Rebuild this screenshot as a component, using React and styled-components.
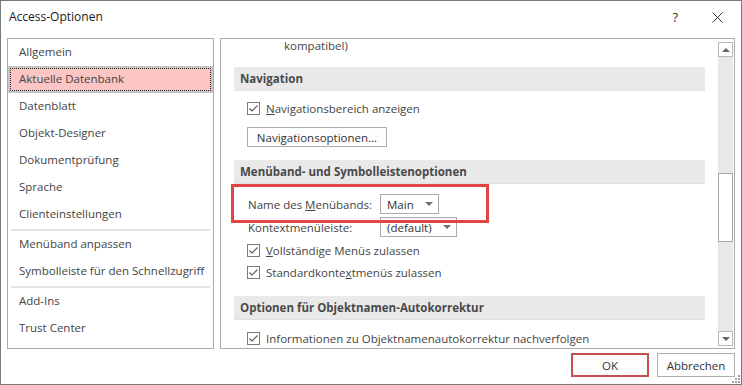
import React from 'react'
import styled, { createGlobalStyle } from 'styled-components';

const GlobalStyle = createGlobalStyle`
html, body {
  margin: 0;
  padding: 0;
  background: #fff;
}
body {
  font-family: "Open Sans", "Noto Sans", sans-serif;
  font-size: 11px;
  color: #444;
}
`;

const categories = [
  { label: 'Allgemein' },
  { label: 'Aktuelle Datenbank', active: true },
  { label: 'Datenblatt' },
  { label: 'Objekt-Designer' },
  { label: 'Dokumentprüfung' },
  { label: 'Sprache' },
  { label: 'Clienteinstellungen' },
  { separator: true },
  { label: 'Menüband anpassen' },
  { label: 'Symbolleiste für den Schnellzugriff' },
  { separator: true },
  { label: 'Add-Ins' },
  { label: 'Trust Center' },
];

const CheckIcon = () => (
  <svg width="13" height="13" viewBox="0 0 13 13">
    <rect x="0.5" y="0.5" width="12" height="12" fill="#fff" stroke="#7a7a7a" />
    <polyline points="2.5,6.5 5,9 10.5,3.5" fill="none" stroke="#555" strokeWidth="1.1" />
  </svg>
);

const Checkbox = ({ children }) => (
  <CheckRow>
    <CheckIcon />
    <span>{children}</span>
  </CheckRow>
);

const Combo = ({ value, width }) => (
  <ComboBox $width={width}>
    <span>{value}</span>
    <Caret />
  </ComboBox>
);

const App = () => {
  return (
    <>
      <GlobalStyle />
      <Window>
        <TitleBar>
          <Title>Access-Optionen</Title>
          <TitleButtons>
            <HelpButton>?</HelpButton>
            <CloseButton>
              <svg width="11" height="11" viewBox="0 0 11 11">
                <path d="M0.5 0.5 L10.5 10.5 M10.5 0.5 L0.5 10.5" stroke="#333" strokeWidth="1" />
              </svg>
            </CloseButton>
          </TitleButtons>
        </TitleBar>

        <Body>
          <CategoryList>
            {categories.map((c, i) =>
              c.separator ? (
                <Separator key={i} />
              ) : (
                <CategoryItem key={i} $active={c.active}>{c.label}</CategoryItem>
              )
            )}
          </CategoryList>

          <SettingsPanel>
            <SettingsContent>
              <CutLine>kompatibel)</CutLine>

              <SectionHeader $top={14}>Navigation</SectionHeader>
              <Indent $top={6}>
                <Checkbox><u>N</u>avigationsbereich anzeigen</Checkbox>
              </Indent>
              <Indent $top={8}>
                <PushButton>Navigationsoptionen...</PushButton>
              </Indent>

              <SectionHeader $top={13}>Menüband- und Symbolleistenoptionen</SectionHeader>
              <FieldRow $top={10}>
                <FieldLabel>Name des <u>M</u>enübands:</FieldLabel>
                <Combo value="Main" width={59} />
                <Highlight />
              </FieldRow>
              <FieldRow $top={3}>
                <FieldLabel>Kontextmenüleiste:</FieldLabel>
                <Combo value="(default)" width={77} />
              </FieldRow>
              <Indent $top={2}>
                <Checkbox><u>V</u>ollständige Menüs zulassen</Checkbox>
                <Checkbox>Standardkonte<u>x</u>tmenüs zulassen</Checkbox>
              </Indent>

              <SectionHeader $top={13}>Optionen für Objektnamen-Autokorrektur</SectionHeader>
              <Indent $top={7}>
                <Checkbox>Informationen zu Objektnamenautokorrektur nachverfolgen</Checkbox>
              </Indent>
            </SettingsContent>

            <ScrollBar>
              <ScrollArrow><ArrowUp /></ScrollArrow>
              <ScrollTrack>
                <ScrollThumb $offset={116} $size={69} />
              </ScrollTrack>
              <ScrollArrow><ArrowDown /></ScrollArrow>
            </ScrollBar>
          </SettingsPanel>
        </Body>

        <Footer>
          <DialogButton $primary>OK</DialogButton>
          <DialogButton>Abbrechen</DialogButton>
          <Grip>
            <svg width="8" height="8" viewBox="0 0 8 8">
              <rect x="6" y="0" width="2" height="2" fill="#a0a0a0" />
              <rect x="3" y="3" width="2" height="2" fill="#a0a0a0" />
              <rect x="6" y="3" width="2" height="2" fill="#a0a0a0" />
              <rect x="0" y="6" width="2" height="2" fill="#a0a0a0" />
              <rect x="3" y="6" width="2" height="2" fill="#a0a0a0" />
              <rect x="6" y="6" width="2" height="2" fill="#a0a0a0" />
            </svg>
          </Grip>
        </Footer>
      </Window>
    </>
  )
}

export default App

const Window = styled.div`
width: 742px;
height: 385px;
box-sizing: border-box;
border: 1px solid #7a7a7a;
background: #fff;
display: flex;
flex-direction: column;
`;

const TitleBar = styled.div`
height: 37px;
box-sizing: border-box;
padding: 7px 0 0 8px;
display: flex;
justify-content: space-between;
align-items: flex-start;
`;

const Title = styled.div`
font-size: 12px;
line-height: 18px;
color: #1a1a1a;
`;

const TitleButtons = styled.div`
display: flex;
align-items: center;
height: 18px;
padding-right: 18px;
gap: 34px;
`;

const HelpButton = styled.span`
font-size: 13px;
color: #333;
line-height: 18px;
`;

const CloseButton = styled.span`
display: flex;
align-items: center;
`;

const Body = styled.div`
display: flex;
gap: 6px;
padding: 0 6px;
height: 311px;
`;

const Panel = styled.div`
box-sizing: border-box;
border: 1px solid #ababab;
height: 311px;
background: #fff;
`;

const CategoryList = styled(Panel)`
width: 207px;
display: flex;
flex-direction: column;
`;

const CategoryItem = styled.div`
height: 27px;
box-sizing: border-box;
line-height: 25px;
padding-left: 11px;
color: #444;
font-size: 11.5px;
white-space: nowrap;
${p => p.$active && `
  background: #fdc4c4;
  border: 2px solid #c6c6c6;
  line-height: 21px;
  outline: 1px dotted #222;
  outline-offset: -3px;
  padding-left: 9px;
`}
`;

const Separator = styled.div`
height: 3px;
display: flex;
align-items: center;
&::after {
  content: '';
  flex: 1;
  height: 2px;
  margin: 0 3px;
  background: #e3e3e3;
}
`;

const SettingsPanel = styled(Panel)`
width: 515px;
display: flex;
`;

const SettingsContent = styled.div`
flex: 1;
overflow: hidden;
padding: 0 13px;
display: flex;
flex-direction: column;
`;

const CutLine = styled.div`
line-height: 14px;
padding-left: 50px;
font-size: 11.5px;
`;

const SectionHeader = styled.div`
margin-top: ${p => p.$top}px;
height: 24px;
box-sizing: border-box;
line-height: 23px;
background: #e9e9e9;
border-bottom: 1px solid #e2e2e2;
padding-left: 6px;
font-weight: bold;
font-size: 11.5px;
color: #4a4a4a;
`;

const Indent = styled.div`
margin-top: ${p => p.$top}px;
padding-left: 13px;
display: flex;
flex-direction: column;
align-items: flex-start;
`;

const CheckRow = styled.label`
display: flex;
align-items: center;
gap: 6px;
height: 22px;
font-size: 11.5px;
color: #444;
white-space: nowrap;
svg { flex: none; }
`;

const PushButton = styled.button`
height: 20px;
width: 140px;
box-sizing: border-box;
border: 1px solid #adadad;
background: #fdfdfd;
font-family: inherit;
font-size: 11.5px;
color: #333;
padding: 0;
`;

const FieldRow = styled.div`
position: relative;
margin-top: ${p => p.$top}px;
padding-left: 14px;
display: flex;
align-items: center;
height: 20px;
`;

const FieldLabel = styled.span`
width: 132px;
font-size: 11.5px;
color: #444;
white-space: nowrap;
`;

const ComboBox = styled.div`
width: ${p => p.$width}px;
height: 20px;
box-sizing: border-box;
border: 1px solid #ababab;
background: #fff;
display: flex;
align-items: center;
justify-content: space-between;
padding: 0 5px 0 6px;
font-size: 11.5px;
color: #333;
`;

const Caret = styled.span`
width: 0;
height: 0;
border-left: 4px solid transparent;
border-right: 4px solid transparent;
border-top: 4px solid #707070;
`;

const Highlight = styled.div`
position: absolute;
left: -3px;
top: -10px;
width: 258px;
height: 39px;
box-sizing: border-box;
border: 3px solid #e24545;
pointer-events: none;
z-index: 2;
`;

const ScrollBar = styled.div`
width: 16px;
box-sizing: border-box;
padding: 3px 1px 2px 0;
display: flex;
flex-direction: column;
`;

const ScrollArrow = styled.div`
height: 15px;
box-sizing: border-box;
border: 1px solid #b8b8b8;
background: #fff;
display: flex;
align-items: center;
justify-content: center;
`;

const ArrowUp = styled.span`
border-left: 4px solid transparent;
border-right: 4px solid transparent;
border-bottom: 4px solid #666;
`;

const ArrowDown = styled.span`
border-left: 4px solid transparent;
border-right: 4px solid transparent;
border-top: 4px solid #666;
`;

const ScrollTrack = styled.div`
flex: 1;
background: #e8e8e8;
display: flex;
flex-direction: column;
`;

const ScrollThumb = styled.div`
margin-top: ${p => p.$offset}px;
height: ${p => p.$size}px;
box-sizing: border-box;
border: 1px solid #a8a8a8;
background: #fff;
`;

const Footer = styled.div`
position: relative;
flex: 1;
display: flex;
justify-content: flex-end;
align-items: flex-start;
gap: 8px;
padding: 4px 6px 0 0;
`;

const DialogButton = styled.button`
width: 78px;
height: 24px;
box-sizing: border-box;
background: #fdfdfd;
border: ${p => (p.$primary ? '2px solid #c44f4f' : '1px solid #adadad')};
font-family: inherit;
font-size: 11.5px;
color: #333;
padding: 0;
`;

const Grip = styled.div`
position: absolute;
right: 1px;
bottom: 1px;
display: flex;
`;
